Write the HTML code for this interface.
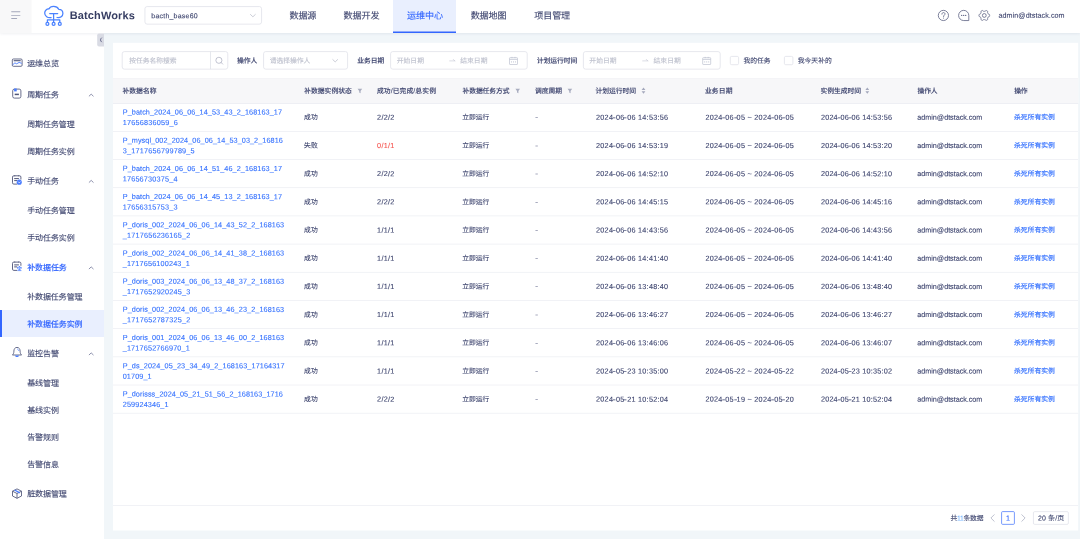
<!DOCTYPE html>
<html lang="zh-CN"><head><meta charset="utf-8"><title>BatchWorks</title><style>
html,body{margin:0;padding:0;}
body{width:1080px;height:539px;overflow:hidden;background:#f1f6f9;position:relative;font-family:"Liberation Sans","Noto Sans CJK SC",sans-serif;-webkit-font-smoothing:antialiased;}
.a{position:absolute;box-sizing:border-box;}
.t i{display:inline-block;font-style:normal;transform:scaleX(1.35);}
.t{white-space:nowrap;transform-origin:0 0;-webkit-text-stroke:0.1px currentColor;}
#w{position:absolute;left:0;top:0;width:1080px;height:539px;overflow:hidden;will-change:transform;}
#t1{letter-spacing:0.140px}#t2{letter-spacing:0.212px}#t3{letter-spacing:-0.128px}#t4{letter-spacing:-0.070px}#t5{letter-spacing:-0.120px}#t6{letter-spacing:-0.120px}#t7{letter-spacing:-0.145px}#t8{letter-spacing:0.054px}#t9{letter-spacing:-0.072px}#t10{letter-spacing:-0.072px}#t11{letter-spacing:-0.098px}#t12{letter-spacing:-0.098px}#t13{letter-spacing:-0.072px}#t14{letter-spacing:-0.098px}#t15{letter-spacing:-0.098px}#t16{letter-spacing:-0.087px}#t17{letter-spacing:-0.105px}#t18{letter-spacing:-0.105px}#t19{letter-spacing:-0.072px}#t20{letter-spacing:-0.072px}#t21{letter-spacing:-0.072px}#t22{letter-spacing:-0.072px}#t23{letter-spacing:-0.072px}#t24{letter-spacing:-0.087px}#t25{letter-spacing:-0.039px}#t26{letter-spacing:0.005px}#t27{letter-spacing:-0.029px}#t28{letter-spacing:-0.070px}#t29{letter-spacing:0.005px}#t30{letter-spacing:0.005px}#t31{letter-spacing:-0.029px}#t32{letter-spacing:0.005px}#t33{letter-spacing:0.005px}#t34{letter-spacing:-0.095px}#t35{letter-spacing:0.024px}#t36{letter-spacing:0.024px}#t37{letter-spacing:0.004px}#t38{letter-spacing:0.095px}#t39{letter-spacing:-0.067px}#t40{letter-spacing:-0.020px}#t41{letter-spacing:-0.029px}#t42{letter-spacing:0.105px}#t43{letter-spacing:-0.029px}#t44{letter-spacing:-0.095px}#t45{letter-spacing:-0.119px}#t46{letter-spacing:0.096px}#t47{letter-spacing:0.225px}#t48{letter-spacing:0.132px}#t49{letter-spacing:0.244px}#t50{letter-spacing:-0.070px}#t52{letter-spacing:0.262px}#t53{letter-spacing:0.270px}#t54{letter-spacing:0.204px}#t55{letter-spacing:-0.044px}#t56{letter-spacing:0.013px}#t57{letter-spacing:0.088px}#t58{letter-spacing:0.212px}#t59{letter-spacing:0.132px}#t60{letter-spacing:0.244px}#t61{letter-spacing:-0.070px}#t63{letter-spacing:0.262px}#t64{letter-spacing:0.270px}#t65{letter-spacing:0.204px}#t66{letter-spacing:-0.044px}#t67{letter-spacing:0.013px}#t68{letter-spacing:0.096px}#t69{letter-spacing:0.194px}#t70{letter-spacing:0.132px}#t71{letter-spacing:0.244px}#t72{letter-spacing:-0.070px}#t74{letter-spacing:0.262px}#t75{letter-spacing:0.270px}#t76{letter-spacing:0.204px}#t77{letter-spacing:-0.044px}#t78{letter-spacing:0.013px}#t79{letter-spacing:0.096px}#t80{letter-spacing:0.194px}#t81{letter-spacing:0.132px}#t82{letter-spacing:0.244px}#t83{letter-spacing:-0.070px}#t85{letter-spacing:0.262px}#t86{letter-spacing:0.270px}#t87{letter-spacing:0.204px}#t88{letter-spacing:-0.044px}#t89{letter-spacing:0.013px}#t90{letter-spacing:0.095px}#t91{letter-spacing:0.208px}#t92{letter-spacing:0.132px}#t93{letter-spacing:0.244px}#t94{letter-spacing:-0.070px}#t96{letter-spacing:0.262px}#t97{letter-spacing:0.270px}#t98{letter-spacing:0.204px}#t99{letter-spacing:-0.044px}#t100{letter-spacing:0.013px}#t101{letter-spacing:0.095px}#t102{letter-spacing:0.171px}#t103{letter-spacing:0.132px}#t104{letter-spacing:0.244px}#t105{letter-spacing:-0.070px}#t107{letter-spacing:0.262px}#t108{letter-spacing:0.270px}#t109{letter-spacing:0.204px}#t110{letter-spacing:-0.044px}#t111{letter-spacing:0.013px}#t112{letter-spacing:0.095px}#t113{letter-spacing:0.208px}#t114{letter-spacing:0.132px}#t115{letter-spacing:0.244px}#t116{letter-spacing:-0.070px}#t118{letter-spacing:0.262px}#t119{letter-spacing:0.270px}#t120{letter-spacing:0.204px}#t121{letter-spacing:-0.044px}#t122{letter-spacing:0.013px}#t123{letter-spacing:0.095px}#t124{letter-spacing:0.208px}#t125{letter-spacing:0.132px}#t126{letter-spacing:0.244px}#t127{letter-spacing:-0.070px}#t129{letter-spacing:0.262px}#t130{letter-spacing:0.270px}#t131{letter-spacing:0.204px}#t132{letter-spacing:-0.044px}#t133{letter-spacing:0.013px}#t134{letter-spacing:0.095px}#t135{letter-spacing:0.171px}#t136{letter-spacing:0.132px}#t137{letter-spacing:0.244px}#t138{letter-spacing:-0.070px}#t140{letter-spacing:0.262px}#t141{letter-spacing:0.270px}#t142{letter-spacing:0.204px}#t143{letter-spacing:-0.044px}#t144{letter-spacing:0.013px}#t145{letter-spacing:0.110px}#t146{letter-spacing:0.116px}#t147{letter-spacing:0.132px}#t148{letter-spacing:0.244px}#t149{letter-spacing:-0.070px}#t151{letter-spacing:0.262px}#t152{letter-spacing:0.270px}#t153{letter-spacing:0.204px}#t154{letter-spacing:-0.044px}#t155{letter-spacing:0.013px}#t156{letter-spacing:0.085px}#t157{letter-spacing:0.153px}#t158{letter-spacing:0.132px}#t159{letter-spacing:0.244px}#t160{letter-spacing:-0.070px}#t162{letter-spacing:0.262px}#t163{letter-spacing:0.270px}#t164{letter-spacing:0.204px}#t165{letter-spacing:-0.044px}#t166{letter-spacing:0.013px}#t167{letter-spacing:-0.241px}#t169{letter-spacing:0.090px}</style></head><body><div id="w">
<div class="a" style="left:0.00px;top:33.00px;width:104.00px;height:506.00px;background:#fff;"></div>
<div class="a" style="left:0.00px;top:0.00px;width:1080.00px;height:33.20px;background:#fff;box-shadow:0 1px 2.5px rgba(50,60,120,0.08);"></div>
<div class="a" style="left:393.00px;top:0.00px;width:63.30px;height:33.20px;background:#e9effe;"></div>
<div class="a" style="left:393.00px;top:31.00px;width:63.30px;height:2.00px;background:linear-gradient(to bottom,#8fa9fb 0,#8fa9fb 50%,#3366ff 50%,#3366ff 100%);"></div>
<div class="a" style="left:0.00px;top:309.80px;width:104.00px;height:27.20px;background:#e9effe;"></div>
<div class="a" style="left:0.00px;top:309.80px;width:2.00px;height:27.20px;background:#3366ff;"></div>
<svg class="a" style="left:0;top:0" width="1080" height="539" viewBox="0 0 1080 539">
<rect x="113.00" y="42.80" width="965.20" height="487.70" rx="0" fill="#fff"/>
<rect x="0.00" y="0.00" width="31.60" height="33.10" rx="0" fill="#f8f8f9"/>
<rect x="11.10" y="11.25" width="9.30" height="0.90" rx="0.4" fill="#a3a7bb"/>
<rect x="11.10" y="14.90" width="9.30" height="0.90" rx="0.4" fill="#a3a7bb"/>
<rect x="11.10" y="18.05" width="6.10" height="0.90" rx="0.4" fill="#a3a7bb"/>
<g transform="translate(43.50 5.70)" fill="none"><g stroke="#4a82ff" stroke-width="1.25" stroke-linecap="round" stroke-linejoin="round"><path d="M7.6 11.9 C4.2 12.4 1.2 10.6 1.2 7.4 C1.2 4.6 3.4 3.1 5.4 3.3 C6.3 1.3 8.3 0.7 10.1 0.7 C12.6 0.7 14.4 1.9 15.2 3.6 C17.6 3.6 19.4 5.3 19.4 7.7 C19.4 10.4 17 12.3 13.6 11.8"/><path d="M6.2 7.8 H14.2 M10.1 7.8 V16.7 M3.9 16.4 V14.1 H16.3 V16.4"/><circle cx="3.9" cy="18.2" r="1.45"/><circle cx="10.1" cy="18.2" r="1.45"/><circle cx="16.3" cy="18.2" r="1.45"/></g></g>
<rect x="144.95" y="6.55" width="116.60" height="17.60" rx="2.2" fill="none" stroke="#dcdee6" stroke-width="0.7"/>
<g transform="translate(249.90 13.70)" fill="none"><path d="M0.6 0.8 L3 3.1 L5.4 0.8" stroke="#b4b7c6" stroke-width="0.7" stroke-linecap="round" stroke-linejoin="round"/></g>
<g transform="translate(937.40 9.45)" fill="none"><circle cx="6" cy="6" r="5.1" stroke="#5d6283" stroke-width="0.8"/><path d="M4.5 4.7 C4.5 3.7 5.2 3.1 6.1 3.1 C7 3.1 7.6 3.7 7.6 4.5 C7.6 5.5 6.1 5.7 6.1 7.1" stroke="#5d6283" stroke-width="0.8" stroke-linecap="round"/><circle cx="6.1" cy="8.6" r="0.5" fill="#5d6283"/></g>
<g transform="translate(957.70 9.45)" fill="none"><path d="M6 0.9 A5.1 5.1 0 1 0 6 11.1 H11.1 V6 A5.1 5.1 0 0 0 6 0.9 Z" stroke="#5d6283" stroke-width="0.8" stroke-linejoin="round"/><circle cx="4" cy="6" r="0.65" fill="#5d6283"/><circle cx="6" cy="6" r="0.65" fill="#5d6283"/><circle cx="8" cy="6" r="0.65" fill="#5d6283"/></g>
<g transform="translate(978.30 9.45)" fill="none"><path d="M11.35 6.00 L11.34 6.35 L11.30 6.70 L11.06 7.01 L10.59 7.23 L10.11 7.39 L9.83 7.59 L9.72 7.84 L9.59 8.07 L9.45 8.31 L9.29 8.53 L9.26 8.86 L9.36 9.36 L9.40 9.88 L9.26 10.24 L8.97 10.45 L8.68 10.63 L8.37 10.80 L8.05 10.94 L7.66 10.89 L7.23 10.59 L6.85 10.25 L6.54 10.11 L6.27 10.14 L6.00 10.15 L5.73 10.14 L5.46 10.11 L5.15 10.25 L4.77 10.59 L4.34 10.89 L3.95 10.94 L3.63 10.80 L3.33 10.63 L3.03 10.45 L2.74 10.24 L2.60 9.88 L2.64 9.36 L2.74 8.86 L2.71 8.53 L2.55 8.31 L2.41 8.07 L2.28 7.84 L2.17 7.59 L1.89 7.39 L1.41 7.23 L0.94 7.01 L0.70 6.70 L0.66 6.35 L0.65 6.00 L0.66 5.65 L0.70 5.30 L0.94 4.99 L1.41 4.77 L1.89 4.61 L2.17 4.41 L2.28 4.16 L2.41 3.93 L2.55 3.69 L2.71 3.47 L2.74 3.14 L2.64 2.64 L2.60 2.12 L2.74 1.76 L3.03 1.55 L3.32 1.37 L3.63 1.20 L3.95 1.06 L4.34 1.11 L4.77 1.41 L5.15 1.75 L5.46 1.89 L5.73 1.86 L6.00 1.85 L6.27 1.86 L6.54 1.89 L6.85 1.75 L7.23 1.41 L7.66 1.11 L8.05 1.06 L8.37 1.20 L8.68 1.37 L8.97 1.55 L9.26 1.76 L9.40 2.12 L9.36 2.64 L9.26 3.14 L9.29 3.47 L9.45 3.69 L9.59 3.92 L9.72 4.16 L9.83 4.41 L10.11 4.61 L10.59 4.77 L11.06 4.99 L11.30 5.30 L11.34 5.65 Z" stroke="#5d6283" stroke-width="0.8" stroke-linejoin="round"/><circle cx="6" cy="6" r="1.9" stroke="#5d6283" stroke-width="0.8"/></g>
<path d="M104 33.4 H99 Q97.2 33.4 97.2 35.2 V44.8 Q97.2 46.6 99 46.6 H104 Z" fill="#d9dbe4"/>
<g transform="translate(98.60 37.40)" fill="none"><path d="M2.9 0.5 C1.5 1.6 1.5 3.4 2.9 4.5" stroke="#5d6283" stroke-width="0.9" stroke-linecap="round"/></g>
<g transform="translate(88.30 93.05)" fill="none"><path d="M0.9 3 L2.9 1.1 L4.9 3" stroke="#8d91ad" stroke-width="1" stroke-linecap="round" stroke-linejoin="round"/></g>
<g transform="translate(88.30 179.30)" fill="none"><path d="M0.9 3 L2.9 1.1 L4.9 3" stroke="#8d91ad" stroke-width="1" stroke-linecap="round" stroke-linejoin="round"/></g>
<g transform="translate(88.30 265.80)" fill="none"><path d="M0.9 3 L2.9 1.1 L4.9 3" stroke="#8d91ad" stroke-width="1" stroke-linecap="round" stroke-linejoin="round"/></g>
<g transform="translate(88.30 351.80)" fill="none"><path d="M0.9 3 L2.9 1.1 L4.9 3" stroke="#8d91ad" stroke-width="1" stroke-linecap="round" stroke-linejoin="round"/></g>
<g transform="translate(11.50 58.20)" fill="none"><rect x="0.8" y="0.8" width="9.8" height="7.3" rx="1.1" stroke="#4f5578" stroke-width="0.85"/><path d="M2.2 2.5 H9.2" stroke="#4f5578" stroke-width="1.1"/><path d="M1.4 6.4 L3.4 4.7 L5.2 5.6 L7.6 4.2 L9.8 5" stroke="#4a7dff" stroke-width="0.9" stroke-linejoin="round" stroke-linecap="round"/></g>
<g transform="translate(11.80 88.10)" fill="none"><rect x="0.9" y="1" width="8.2" height="9" rx="1.7" stroke="#4f5578" stroke-width="0.85"/><rect x="2.3" y="0.4" width="2.6" height="2.9" fill="#4a7dff"/><path d="M2.9 6.3 H7.1" stroke="#4f5578" stroke-width="1.5"/></g>
<g transform="translate(11.60 174.70)" fill="none"><path d="M5.2 9.4 H2.2 C1.3 9.4 0.9 9 0.9 8.1 V2.4 C0.9 1.5 1.3 1.1 2.2 1.1 H8 C8.9 1.1 9.3 1.5 9.3 2.4 V4.4" stroke="#4f5578" stroke-width="0.9" stroke-linecap="round"/><path d="M3.1 0.7 V1.3 M7.1 0.7 V1.3" stroke="#4f5578" stroke-width="0.6" stroke-linecap="round"/><path d="M3 3.9 H6.9 M3 5.9 H5.1" stroke="#4f5578" stroke-width="1" stroke-linecap="round"/><circle cx="7.65" cy="7.45" r="2.55" fill="#4a7dff"/><path d="M6.75 7.2 L7.65 8.2 L8.55 7.2" stroke="#fff" stroke-width="0.7" stroke-linecap="round" stroke-linejoin="round"/></g>
<g transform="translate(11.60 261.00)" fill="none"><path d="M5.2 9.4 H2.2 C1.3 9.4 0.9 9 0.9 8.1 V2.4 C0.9 1.5 1.3 1.1 2.2 1.1 H8 C8.9 1.1 9.3 1.5 9.3 2.4 V4.4" stroke="#4f5578" stroke-width="0.9" stroke-linecap="round"/><path d="M3.1 0.7 V1.3 M7.1 0.7 V1.3" stroke="#4f5578" stroke-width="0.6" stroke-linecap="round"/><path d="M3 3.9 H6.9 M3 5.9 H5.1" stroke="#4f5578" stroke-width="1" stroke-linecap="round"/><circle cx="6.3" cy="6.5" r="0.75" fill="#4a7dff"/><circle cx="7.8" cy="5.8" r="0.75" fill="#4a7dff"/><circle cx="9.3" cy="6.5" r="0.75" fill="#4a7dff"/><path d="M6 7.6 L7.8 8.7 L9.6 7.6 M7.8 6.8 V8.7 M6.2 9.6 H9.4" stroke="#4a7dff" stroke-width="0.75" stroke-linecap="round" stroke-linejoin="round"/></g>
<g transform="translate(11.50 346.60)" fill="none"><path d="M5.5 0.8 C3.4 0.8 2.4 2.5 2.4 4.5 C2.4 6.4 1.9 7.5 0.9 8.4 H10.1 C9.1 7.5 8.6 6.4 8.6 4.5 C8.6 2.5 7.6 0.8 5.5 0.8 Z" stroke="#4f5578" stroke-width="0.85" stroke-linejoin="round"/><path d="M3.5 8.9 C3.9 10.9 7.1 10.9 7.5 8.9 Z" fill="#4a7dff"/><path d="M6 2.5 C6.7 2.7 7.1 3.3 7.2 4" stroke="#4a7dff" stroke-width="0.7" stroke-linecap="round"/></g>
<g transform="translate(11.50 488.10)" fill="none"><path d="M5.5 0.8 L10 3.1 V7.9 L5.5 10.2 L1 7.9 V3.1 Z" stroke="#4f5578" stroke-width="0.85" stroke-linejoin="round"/><path d="M1 3.1 L5.5 5.4 L10 3.1 M5.5 5.4 V10.2" stroke="#4f5578" stroke-width="0.85" stroke-linejoin="round"/><path d="M3.1 1.9 L8.3 4.8" stroke="#4a7dff" stroke-width="1.4"/></g>
<rect x="122.20" y="51.60" width="105.60" height="17.55" rx="2.2" fill="none" stroke="#dcdee6" stroke-width="0.7"/>
<rect x="210.05" y="51.60" width="0.7" height="17.55" fill="#dcdee6"/>
<g transform="translate(215.30 56.70)" fill="none"><circle cx="3.6" cy="3.6" r="3.05" stroke="#adb0c2" stroke-width="0.75"/><path d="M5.8 5.8 L7.4 7.4" stroke="#adb0c2" stroke-width="0.75" stroke-linecap="round"/></g>
<rect x="263.55" y="51.60" width="84.05" height="17.55" rx="2.2" fill="none" stroke="#dcdee6" stroke-width="0.7"/>
<g transform="translate(332.20 58.80)" fill="none"><path d="M0.6 0.8 L3 3.1 L5.4 0.8" stroke="#b4b7c6" stroke-width="0.7" stroke-linecap="round" stroke-linejoin="round"/></g>
<rect x="390.60" y="51.60" width="136.60" height="17.55" rx="2.2" fill="none" stroke="#dcdee6" stroke-width="0.7"/>
<g transform="translate(449.40 58.50)" fill="none"><path d="M0.3 2.4 H5.4 M3.9 0.9 L5.4 2.4" stroke="#c3c5d1" stroke-width="0.6" stroke-linecap="round"/></g>
<g transform="translate(508.80 56.50)" fill="none"><rect x="0.7" y="1.2" width="8" height="6.8" rx="0.5" stroke="#c2c5d3" stroke-width="0.75"/><path d="M0.7 2.9 H8.7" stroke="#c2c5d3" stroke-width="0.8"/><path d="M3.2 0.4 V1.6 M6.2 0.4 V1.6" stroke="#c2c5d3" stroke-width="0.9"/><path d="M2.7 4.8 V6 M4.7 4.8 V6 M6.7 4.8 V6" stroke="#c2c5d3" stroke-width="0.85"/></g>
<rect x="583.40" y="51.60" width="136.80" height="17.55" rx="2.2" fill="none" stroke="#dcdee6" stroke-width="0.7"/>
<g transform="translate(642.40 58.50)" fill="none"><path d="M0.3 2.4 H5.4 M3.9 0.9 L5.4 2.4" stroke="#c3c5d1" stroke-width="0.6" stroke-linecap="round"/></g>
<g transform="translate(702.00 56.50)" fill="none"><rect x="0.7" y="1.2" width="8" height="6.8" rx="0.5" stroke="#c2c5d3" stroke-width="0.75"/><path d="M0.7 2.9 H8.7" stroke="#c2c5d3" stroke-width="0.8"/><path d="M3.2 0.4 V1.6 M6.2 0.4 V1.6" stroke="#c2c5d3" stroke-width="0.9"/><path d="M2.7 4.8 V6 M4.7 4.8 V6 M6.7 4.8 V6" stroke="#c2c5d3" stroke-width="0.85"/></g>
<rect x="730.30" y="56.40" width="8.30" height="8.30" rx="1.3" fill="none" stroke="#dcdee6" stroke-width="0.7"/>
<rect x="784.40" y="56.40" width="8.50" height="8.30" rx="1.3" fill="none" stroke="#dcdee6" stroke-width="0.7"/>
<rect x="113.00" y="78.00" width="965.20" height="25.55" rx="0" fill="#f7f7f9"/>
<rect x="113.00" y="103.00" width="965.20" height="0.6" fill="#e6e8ee"/>
<rect x="113.00" y="77.95" width="965.20" height="0.5" fill="#eff0f4"/>
<g transform="translate(357.40 88.30)" fill="none"><path d="M0.2 0.4 H4.8 L3.2 2.7 V5 L1.8 4.3 V2.7 Z" fill="#a9adc0"/></g>
<g transform="translate(515.20 88.30)" fill="none"><path d="M0.2 0.4 H4.8 L3.2 2.7 V5 L1.8 4.3 V2.7 Z" fill="#a9adc0"/></g>
<g transform="translate(567.40 88.30)" fill="none"><path d="M0.2 0.4 H4.8 L3.2 2.7 V5 L1.8 4.3 V2.7 Z" fill="#a9adc0"/></g>
<g transform="translate(641.50 87.40)" fill="none"><path d="M0.1 2.6 L2 0.2 L3.9 2.6 Z M0.1 3.9 L2 6.3 L3.9 3.9 Z" fill="#a4a8bc"/></g>
<g transform="translate(865.30 87.40)" fill="none"><path d="M0.1 2.6 L2 0.2 L3.9 2.6 Z M0.1 3.9 L2 6.3 L3.9 3.9 Z" fill="#a4a8bc"/></g>
<rect x="113.00" y="130.99" width="965.20" height="0.7" fill="#ebedf2"/>
<rect x="113.00" y="159.18" width="965.20" height="0.7" fill="#ebedf2"/>
<rect x="113.00" y="187.36" width="965.20" height="0.7" fill="#ebedf2"/>
<rect x="113.00" y="215.55" width="965.20" height="0.7" fill="#ebedf2"/>
<rect x="113.00" y="243.74" width="965.20" height="0.7" fill="#ebedf2"/>
<rect x="113.00" y="271.92" width="965.20" height="0.7" fill="#ebedf2"/>
<rect x="113.00" y="300.11" width="965.20" height="0.7" fill="#ebedf2"/>
<rect x="113.00" y="328.30" width="965.20" height="0.7" fill="#ebedf2"/>
<rect x="113.00" y="356.49" width="965.20" height="0.7" fill="#ebedf2"/>
<rect x="113.00" y="384.67" width="965.20" height="0.7" fill="#ebedf2"/>
<rect x="113.00" y="412.86" width="965.20" height="0.7" fill="#ebedf2"/>
<rect x="113.00" y="505.10" width="965.20" height="0.7" fill="#ebedf2"/>
<g transform="translate(990.00 514.00)" fill="none"><path d="M4.2 0.7 L0.9 4 L4.2 7.3" stroke="#a9adc0" stroke-width="0.75" stroke-linecap="round" stroke-linejoin="round"/></g>
<rect x="1001.60" y="511.60" width="12.80" height="12.75" rx="1.0" fill="none" stroke="#4a78fb" stroke-width="0.75"/>
<g transform="translate(1021.00 514.00)" fill="none"><path d="M0.8 0.7 L4.1 4 L0.8 7.3" stroke="#a9adc0" stroke-width="0.75" stroke-linecap="round" stroke-linejoin="round"/></g>
<rect x="1033.45" y="511.65" width="34.90" height="12.70" rx="1.2" fill="none" stroke="#dcdee6" stroke-width="0.7"/>
</svg>
<span class="a t" id="t1" style="left:69px;top:7px;transform:translate(0.66px,0.11px) rotate(0.03deg);font-size:11px;line-height:16px;color:#363d62;font-weight:700;-webkit-text-stroke:0;">BatchWorks</span>
<span class="a t" id="t2" style="left:151px;top:11px;transform:translate(0.32px,0.16px) rotate(0.03deg);font-size:7px;line-height:10px;color:#3d446e;">bacth_base60</span>
<span class="a t" id="t3" style="left:289px;top:9px;transform:translate(0.44px,0.82px) rotate(0.03deg);font-size:9.1px;line-height:13px;color:#3d446e;">数据源</span>
<span class="a t" id="t4" style="left:343px;top:9px;transform:translate(0.44px,0.82px) rotate(0.03deg);font-size:9.1px;line-height:13px;color:#3d446e;">数据开发</span>
<span class="a t" id="t5" style="left:407px;top:9px;transform:translate(0.04px,0.82px) rotate(0.03deg);font-size:9.1px;line-height:13px;color:#3366ff;">运维中心</span>
<span class="a t" id="t6" style="left:470px;top:9px;transform:translate(0.64px,0.82px) rotate(0.03deg);font-size:9.1px;line-height:13px;color:#3d446e;">数据地图</span>
<span class="a t" id="t7" style="left:534px;top:9px;transform:translate(0.24px,0.82px) rotate(0.03deg);font-size:9.1px;line-height:13px;color:#3d446e;">项目管理</span>
<span class="a t" id="t8" style="left:998px;top:9px;transform:translate(0.51px,0.83px) rotate(0.03deg);font-size:7.2px;line-height:11px;color:#3d446e;">admin@dtstack.com</span>
<span class="a t" id="t9" style="left:27px;top:58px;transform:translate(0.18px,0.37px) rotate(0.03deg);font-size:8.0px;line-height:12px;color:#3d446e;">运维总览</span>
<span class="a t" id="t10" style="left:27px;top:89px;transform:translate(0.18px,0.62px) rotate(0.03deg);font-size:8.0px;line-height:12px;color:#3d446e;">周期任务</span>
<span class="a t" id="t11" style="left:27px;top:119px;transform:translate(0.18px,0.12px) rotate(0.03deg);font-size:8.0px;line-height:12px;color:#3d446e;">周期任务管理</span>
<span class="a t" id="t12" style="left:27px;top:146px;transform:translate(0.18px,0.37px) rotate(0.03deg);font-size:8.0px;line-height:12px;color:#3d446e;">周期任务实例</span>
<span class="a t" id="t13" style="left:27px;top:175px;transform:translate(0.18px,0.87px) rotate(0.03deg);font-size:8.0px;line-height:12px;color:#3d446e;">手动任务</span>
<span class="a t" id="t14" style="left:27px;top:205px;transform:translate(0.18px,0.37px) rotate(0.03deg);font-size:8.0px;line-height:12px;color:#3d446e;">手动任务管理</span>
<span class="a t" id="t15" style="left:27px;top:232px;transform:translate(0.18px,0.62px) rotate(0.03deg);font-size:8.0px;line-height:12px;color:#3d446e;">手动任务实例</span>
<span class="a t" id="t16" style="left:27px;top:262px;transform:translate(0.18px,0.37px) rotate(0.03deg);font-size:8.0px;line-height:12px;color:#3366ff;font-weight:500;">补数据任务</span>
<span class="a t" id="t17" style="left:27px;top:291px;transform:translate(0.18px,0.62px) rotate(0.03deg);font-size:8.0px;line-height:12px;color:#3d446e;">补数据任务管理</span>
<span class="a t" id="t18" style="left:27px;top:318px;transform:translate(0.18px,0.87px) rotate(0.03deg);font-size:8.0px;line-height:12px;color:#3366ff;font-weight:500;">补数据任务实例</span>
<span class="a t" id="t19" style="left:27px;top:348px;transform:translate(0.18px,0.37px) rotate(0.03deg);font-size:8.0px;line-height:12px;color:#3d446e;">监控告警</span>
<span class="a t" id="t20" style="left:27px;top:377px;transform:translate(0.18px,0.87px) rotate(0.03deg);font-size:8.0px;line-height:12px;color:#3d446e;">基线管理</span>
<span class="a t" id="t21" style="left:27px;top:405px;transform:translate(0.18px,0.12px) rotate(0.03deg);font-size:8.0px;line-height:12px;color:#3d446e;">基线实例</span>
<span class="a t" id="t22" style="left:27px;top:432px;transform:translate(0.18px,0.12px) rotate(0.03deg);font-size:8.0px;line-height:12px;color:#3d446e;">告警规则</span>
<span class="a t" id="t23" style="left:27px;top:459px;transform:translate(0.18px,0.37px) rotate(0.03deg);font-size:8.0px;line-height:12px;color:#3d446e;">告警信息</span>
<span class="a t" id="t24" style="left:27px;top:488px;transform:translate(0.18px,0.62px) rotate(0.03deg);font-size:8.0px;line-height:12px;color:#3d446e;">脏数据管理</span>
<span class="a t" id="t25" style="left:129px;top:55px;transform:translate(0.33px,0.98px) rotate(0.03deg);font-size:6.8px;line-height:10px;color:#bcbfcc;">按任务名称搜索</span>
<span class="a t" id="t26" style="left:236px;top:55px;transform:translate(0.93px,0.98px) rotate(0.03deg);font-size:6.8px;line-height:10px;color:#3d446e;font-weight:500;">操作人</span>
<span class="a t" id="t27" style="left:269px;top:55px;transform:translate(0.73px,0.98px) rotate(0.03deg);font-size:6.8px;line-height:10px;color:#bcbfcc;">请选择操作人</span>
<span class="a t" id="t28" style="left:357px;top:55px;transform:translate(0.23px,0.98px) rotate(0.03deg);font-size:6.8px;line-height:10px;color:#3d446e;font-weight:500;">业务日期</span>
<span class="a t" id="t29" style="left:396px;top:55px;transform:translate(0.73px,0.98px) rotate(0.03deg);font-size:6.8px;line-height:10px;color:#bcbfcc;">开始日期</span>
<span class="a t" id="t30" style="left:460px;top:55px;transform:translate(0.23px,0.98px) rotate(0.03deg);font-size:6.8px;line-height:10px;color:#bcbfcc;">结束日期</span>
<span class="a t" id="t31" style="left:536px;top:55px;transform:translate(0.73px,0.98px) rotate(0.03deg);font-size:6.8px;line-height:10px;color:#3d446e;font-weight:500;">计划运行时间</span>
<span class="a t" id="t32" style="left:589px;top:55px;transform:translate(0.33px,0.98px) rotate(0.03deg);font-size:6.8px;line-height:10px;color:#bcbfcc;">开始日期</span>
<span class="a t" id="t33" style="left:653px;top:55px;transform:translate(0.53px,0.98px) rotate(0.03deg);font-size:6.8px;line-height:10px;color:#bcbfcc;">结束日期</span>
<span class="a t" id="t34" style="left:743px;top:55px;transform:translate(0.53px,0.98px) rotate(0.03deg);font-size:6.8px;line-height:10px;color:#3d446e;">我的任务</span>
<span class="a t" id="t35" style="left:797px;top:55px;transform:translate(0.73px,0.98px) rotate(0.03deg);font-size:6.8px;line-height:10px;color:#3d446e;">我今天补的</span>
<span class="a t" id="t36" style="left:122px;top:86px;transform:translate(0.43px,0.18px) rotate(0.03deg);font-size:6.8px;line-height:10px;color:#3d446e;font-weight:500;">补数据名称</span>
<span class="a t" id="t37" style="left:304px;top:86px;transform:translate(0.18px,0.18px) rotate(0.03deg);font-size:6.8px;line-height:10px;color:#3d446e;font-weight:500;">补数据实例状态</span>
<span class="a t" id="t38" style="left:376px;top:86px;transform:translate(0.93px,0.18px) rotate(0.03deg);font-size:6.8px;line-height:10px;color:#3d446e;font-weight:500;">成功/已完成/总实例</span>
<span class="a t" id="t39" style="left:462px;top:86px;transform:translate(0.43px,0.18px) rotate(0.03deg);font-size:6.8px;line-height:10px;color:#3d446e;font-weight:500;">补数据任务方式</span>
<span class="a t" id="t40" style="left:534px;top:86px;transform:translate(0.93px,0.18px) rotate(0.03deg);font-size:6.8px;line-height:10px;color:#3d446e;font-weight:500;">调度周期</span>
<span class="a t" id="t41" style="left:595px;top:86px;transform:translate(0.43px,0.18px) rotate(0.03deg);font-size:6.8px;line-height:10px;color:#3d446e;font-weight:500;">计划运行时间</span>
<span class="a t" id="t42" style="left:704px;top:86px;transform:translate(0.93px,0.18px) rotate(0.03deg);font-size:6.8px;line-height:10px;color:#3d446e;font-weight:500;">业务日期</span>
<span class="a t" id="t43" style="left:820px;top:86px;transform:translate(0.43px,0.18px) rotate(0.03deg);font-size:6.8px;line-height:10px;color:#3d446e;font-weight:500;">实例生成时间</span>
<span class="a t" id="t44" style="left:917px;top:86px;transform:translate(0.43px,0.18px) rotate(0.03deg);font-size:6.8px;line-height:10px;color:#3d446e;font-weight:500;">操作人</span>
<span class="a t" id="t45" style="left:1014px;top:86px;transform:translate(0.18px,0.18px) rotate(0.03deg);font-size:6.8px;line-height:10px;color:#3d446e;font-weight:500;">操作</span>
<span class="a t" id="t46" style="left:122px;top:107px;transform:translate(0.71px,0.49px) rotate(0.03deg);font-size:7.25px;line-height:10px;color:#3370ff;">P_batch_2024_06_06_14_53_43_2_168163_17</span>
<span class="a t" id="t47" style="left:122px;top:117px;transform:translate(0.71px,0.99px) rotate(0.03deg);font-size:7.25px;line-height:10px;color:#3370ff;">17656836059_6</span>
<span class="a t" id="t48" style="left:303px;top:112px;transform:translate(0.98px,0.58px) rotate(0.03deg);font-size:6.8px;line-height:10px;color:#3d446e;">成功</span>
<span class="a t" id="t49" style="left:377px;top:111px;transform:translate(0.11px,0.74px) rotate(0.03deg);font-size:7.25px;line-height:11px;color:#3d446e;">2/2/2</span>
<span class="a t" id="t50" style="left:462px;top:112px;transform:translate(0.23px,0.58px) rotate(0.03deg);font-size:6.8px;line-height:10px;color:#3d446e;">立即运行</span>
<span class="a t" id="t51" style="left:535px;top:111px;transform:translate(0.31px,0.74px) rotate(0.03deg);font-size:7.25px;line-height:11px;color:#5a6084;-webkit-text-stroke:0;"><i>-</i></span>
<span class="a t" id="t52" style="left:596px;top:111px;transform:translate(0.01px,0.74px) rotate(0.03deg);font-size:7.25px;line-height:11px;color:#3d446e;">2024<i>-</i>06<i>-</i>06 14:53:56</span>
<span class="a t" id="t53" style="left:705px;top:111px;transform:translate(0.41px,0.74px) rotate(0.03deg);font-size:7.25px;line-height:11px;color:#3d446e;">2024<i>-</i>06<i>-</i>05 ~ 2024<i>-</i>06<i>-</i>05</span>
<span class="a t" id="t54" style="left:820px;top:111px;transform:translate(0.91px,0.74px) rotate(0.03deg);font-size:7.25px;line-height:11px;color:#3d446e;">2024<i>-</i>06<i>-</i>06 14:53:56</span>
<span class="a t" id="t55" style="left:917px;top:111px;transform:translate(0.31px,0.74px) rotate(0.03deg);font-size:7.25px;line-height:11px;color:#3d446e;">admin@dtstack.com</span>
<span class="a t" id="t56" style="left:1013px;top:112px;transform:translate(0.98px,0.58px) rotate(0.03deg);font-size:6.8px;line-height:10px;color:#3370ff;-webkit-text-stroke:0.15px currentColor;">杀死所有实例</span>
<span class="a t" id="t57" style="left:122px;top:135px;transform:translate(0.71px,0.68px) rotate(0.03deg);font-size:7.25px;line-height:10px;color:#3370ff;">P_mysql_002_2024_06_06_14_53_03_2_16816</span>
<span class="a t" id="t58" style="left:122px;top:146px;transform:translate(0.71px,0.18px) rotate(0.03deg);font-size:7.25px;line-height:10px;color:#3370ff;">3_1717656799789_5</span>
<span class="a t" id="t59" style="left:303px;top:140px;transform:translate(0.98px,0.76px) rotate(0.03deg);font-size:6.8px;line-height:10px;color:#3d446e;">失败</span>
<span class="a t" id="t60" style="left:377px;top:139px;transform:translate(0.11px,0.93px) rotate(0.03deg);font-size:7.25px;line-height:11px;color:#f5544f;">0/1/1</span>
<span class="a t" id="t61" style="left:462px;top:140px;transform:translate(0.23px,0.76px) rotate(0.03deg);font-size:6.8px;line-height:10px;color:#3d446e;">立即运行</span>
<span class="a t" id="t62" style="left:535px;top:139px;transform:translate(0.31px,0.93px) rotate(0.03deg);font-size:7.25px;line-height:11px;color:#5a6084;-webkit-text-stroke:0;"><i>-</i></span>
<span class="a t" id="t63" style="left:596px;top:139px;transform:translate(0.01px,0.93px) rotate(0.03deg);font-size:7.25px;line-height:11px;color:#3d446e;">2024<i>-</i>06<i>-</i>06 14:53:19</span>
<span class="a t" id="t64" style="left:705px;top:139px;transform:translate(0.41px,0.93px) rotate(0.03deg);font-size:7.25px;line-height:11px;color:#3d446e;">2024<i>-</i>06<i>-</i>05 ~ 2024<i>-</i>06<i>-</i>05</span>
<span class="a t" id="t65" style="left:820px;top:139px;transform:translate(0.91px,0.93px) rotate(0.03deg);font-size:7.25px;line-height:11px;color:#3d446e;">2024<i>-</i>06<i>-</i>06 14:53:20</span>
<span class="a t" id="t66" style="left:917px;top:139px;transform:translate(0.31px,0.93px) rotate(0.03deg);font-size:7.25px;line-height:11px;color:#3d446e;">admin@dtstack.com</span>
<span class="a t" id="t67" style="left:1013px;top:140px;transform:translate(0.98px,0.76px) rotate(0.03deg);font-size:6.8px;line-height:10px;color:#3370ff;-webkit-text-stroke:0.15px currentColor;">杀死所有实例</span>
<span class="a t" id="t68" style="left:122px;top:163px;transform:translate(0.71px,0.87px) rotate(0.03deg);font-size:7.25px;line-height:10px;color:#3370ff;">P_batch_2024_06_06_14_51_46_2_168163_17</span>
<span class="a t" id="t69" style="left:122px;top:174px;transform:translate(0.71px,0.37px) rotate(0.03deg);font-size:7.25px;line-height:10px;color:#3370ff;">17656730375_4</span>
<span class="a t" id="t70" style="left:303px;top:168px;transform:translate(0.98px,0.95px) rotate(0.03deg);font-size:6.8px;line-height:10px;color:#3d446e;">成功</span>
<span class="a t" id="t71" style="left:377px;top:168px;transform:translate(0.11px,0.12px) rotate(0.03deg);font-size:7.25px;line-height:11px;color:#3d446e;">2/2/2</span>
<span class="a t" id="t72" style="left:462px;top:168px;transform:translate(0.23px,0.95px) rotate(0.03deg);font-size:6.8px;line-height:10px;color:#3d446e;">立即运行</span>
<span class="a t" id="t73" style="left:535px;top:168px;transform:translate(0.31px,0.12px) rotate(0.03deg);font-size:7.25px;line-height:11px;color:#5a6084;-webkit-text-stroke:0;"><i>-</i></span>
<span class="a t" id="t74" style="left:596px;top:168px;transform:translate(0.01px,0.12px) rotate(0.03deg);font-size:7.25px;line-height:11px;color:#3d446e;">2024<i>-</i>06<i>-</i>06 14:52:10</span>
<span class="a t" id="t75" style="left:705px;top:168px;transform:translate(0.41px,0.12px) rotate(0.03deg);font-size:7.25px;line-height:11px;color:#3d446e;">2024<i>-</i>06<i>-</i>05 ~ 2024<i>-</i>06<i>-</i>05</span>
<span class="a t" id="t76" style="left:820px;top:168px;transform:translate(0.91px,0.12px) rotate(0.03deg);font-size:7.25px;line-height:11px;color:#3d446e;">2024<i>-</i>06<i>-</i>06 14:52:10</span>
<span class="a t" id="t77" style="left:917px;top:168px;transform:translate(0.31px,0.12px) rotate(0.03deg);font-size:7.25px;line-height:11px;color:#3d446e;">admin@dtstack.com</span>
<span class="a t" id="t78" style="left:1013px;top:168px;transform:translate(0.98px,0.95px) rotate(0.03deg);font-size:6.8px;line-height:10px;color:#3370ff;-webkit-text-stroke:0.15px currentColor;">杀死所有实例</span>
<span class="a t" id="t79" style="left:122px;top:192px;transform:translate(0.71px,0.05px) rotate(0.03deg);font-size:7.25px;line-height:10px;color:#3370ff;">P_batch_2024_06_06_14_45_13_2_168163_17</span>
<span class="a t" id="t80" style="left:122px;top:202px;transform:translate(0.71px,0.55px) rotate(0.03deg);font-size:7.25px;line-height:10px;color:#3370ff;">17656315753_3</span>
<span class="a t" id="t81" style="left:303px;top:197px;transform:translate(0.98px,0.14px) rotate(0.03deg);font-size:6.8px;line-height:10px;color:#3d446e;">成功</span>
<span class="a t" id="t82" style="left:377px;top:196px;transform:translate(0.11px,0.30px) rotate(0.03deg);font-size:7.25px;line-height:11px;color:#3d446e;">2/2/2</span>
<span class="a t" id="t83" style="left:462px;top:197px;transform:translate(0.23px,0.14px) rotate(0.03deg);font-size:6.8px;line-height:10px;color:#3d446e;">立即运行</span>
<span class="a t" id="t84" style="left:535px;top:196px;transform:translate(0.31px,0.30px) rotate(0.03deg);font-size:7.25px;line-height:11px;color:#5a6084;-webkit-text-stroke:0;"><i>-</i></span>
<span class="a t" id="t85" style="left:596px;top:196px;transform:translate(0.01px,0.30px) rotate(0.03deg);font-size:7.25px;line-height:11px;color:#3d446e;">2024<i>-</i>06<i>-</i>06 14:45:15</span>
<span class="a t" id="t86" style="left:705px;top:196px;transform:translate(0.41px,0.30px) rotate(0.03deg);font-size:7.25px;line-height:11px;color:#3d446e;">2024<i>-</i>06<i>-</i>05 ~ 2024<i>-</i>06<i>-</i>05</span>
<span class="a t" id="t87" style="left:820px;top:196px;transform:translate(0.91px,0.30px) rotate(0.03deg);font-size:7.25px;line-height:11px;color:#3d446e;">2024<i>-</i>06<i>-</i>06 14:45:16</span>
<span class="a t" id="t88" style="left:917px;top:196px;transform:translate(0.31px,0.30px) rotate(0.03deg);font-size:7.25px;line-height:11px;color:#3d446e;">admin@dtstack.com</span>
<span class="a t" id="t89" style="left:1013px;top:197px;transform:translate(0.98px,0.14px) rotate(0.03deg);font-size:6.8px;line-height:10px;color:#3370ff;-webkit-text-stroke:0.15px currentColor;">杀死所有实例</span>
<span class="a t" id="t90" style="left:122px;top:220px;transform:translate(0.71px,0.24px) rotate(0.03deg);font-size:7.25px;line-height:10px;color:#3370ff;">P_doris_002_2024_06_06_14_43_52_2_168163</span>
<span class="a t" id="t91" style="left:122px;top:230px;transform:translate(0.71px,0.74px) rotate(0.03deg);font-size:7.25px;line-height:10px;color:#3370ff;">_1717656236165_2</span>
<span class="a t" id="t92" style="left:303px;top:225px;transform:translate(0.98px,0.33px) rotate(0.03deg);font-size:6.8px;line-height:10px;color:#3d446e;">成功</span>
<span class="a t" id="t93" style="left:377px;top:224px;transform:translate(0.11px,0.49px) rotate(0.03deg);font-size:7.25px;line-height:11px;color:#3d446e;">1/1/1</span>
<span class="a t" id="t94" style="left:462px;top:225px;transform:translate(0.23px,0.33px) rotate(0.03deg);font-size:6.8px;line-height:10px;color:#3d446e;">立即运行</span>
<span class="a t" id="t95" style="left:535px;top:224px;transform:translate(0.31px,0.49px) rotate(0.03deg);font-size:7.25px;line-height:11px;color:#5a6084;-webkit-text-stroke:0;"><i>-</i></span>
<span class="a t" id="t96" style="left:596px;top:224px;transform:translate(0.01px,0.49px) rotate(0.03deg);font-size:7.25px;line-height:11px;color:#3d446e;">2024<i>-</i>06<i>-</i>06 14:43:56</span>
<span class="a t" id="t97" style="left:705px;top:224px;transform:translate(0.41px,0.49px) rotate(0.03deg);font-size:7.25px;line-height:11px;color:#3d446e;">2024<i>-</i>06<i>-</i>05 ~ 2024<i>-</i>06<i>-</i>05</span>
<span class="a t" id="t98" style="left:820px;top:224px;transform:translate(0.91px,0.49px) rotate(0.03deg);font-size:7.25px;line-height:11px;color:#3d446e;">2024<i>-</i>06<i>-</i>06 14:43:56</span>
<span class="a t" id="t99" style="left:917px;top:224px;transform:translate(0.31px,0.49px) rotate(0.03deg);font-size:7.25px;line-height:11px;color:#3d446e;">admin@dtstack.com</span>
<span class="a t" id="t100" style="left:1013px;top:225px;transform:translate(0.98px,0.33px) rotate(0.03deg);font-size:6.8px;line-height:10px;color:#3370ff;-webkit-text-stroke:0.15px currentColor;">杀死所有实例</span>
<span class="a t" id="t101" style="left:122px;top:248px;transform:translate(0.71px,0.43px) rotate(0.03deg);font-size:7.25px;line-height:10px;color:#3370ff;">P_doris_002_2024_06_06_14_41_38_2_168163</span>
<span class="a t" id="t102" style="left:122px;top:258px;transform:translate(0.71px,0.93px) rotate(0.03deg);font-size:7.25px;line-height:10px;color:#3370ff;">_1717656100243_1</span>
<span class="a t" id="t103" style="left:303px;top:253px;transform:translate(0.98px,0.51px) rotate(0.03deg);font-size:6.8px;line-height:10px;color:#3d446e;">成功</span>
<span class="a t" id="t104" style="left:377px;top:252px;transform:translate(0.11px,0.68px) rotate(0.03deg);font-size:7.25px;line-height:11px;color:#3d446e;">1/1/1</span>
<span class="a t" id="t105" style="left:462px;top:253px;transform:translate(0.23px,0.51px) rotate(0.03deg);font-size:6.8px;line-height:10px;color:#3d446e;">立即运行</span>
<span class="a t" id="t106" style="left:535px;top:252px;transform:translate(0.31px,0.68px) rotate(0.03deg);font-size:7.25px;line-height:11px;color:#5a6084;-webkit-text-stroke:0;"><i>-</i></span>
<span class="a t" id="t107" style="left:596px;top:252px;transform:translate(0.01px,0.68px) rotate(0.03deg);font-size:7.25px;line-height:11px;color:#3d446e;">2024<i>-</i>06<i>-</i>06 14:41:40</span>
<span class="a t" id="t108" style="left:705px;top:252px;transform:translate(0.41px,0.68px) rotate(0.03deg);font-size:7.25px;line-height:11px;color:#3d446e;">2024<i>-</i>06<i>-</i>05 ~ 2024<i>-</i>06<i>-</i>05</span>
<span class="a t" id="t109" style="left:820px;top:252px;transform:translate(0.91px,0.68px) rotate(0.03deg);font-size:7.25px;line-height:11px;color:#3d446e;">2024<i>-</i>06<i>-</i>06 14:41:40</span>
<span class="a t" id="t110" style="left:917px;top:252px;transform:translate(0.31px,0.68px) rotate(0.03deg);font-size:7.25px;line-height:11px;color:#3d446e;">admin@dtstack.com</span>
<span class="a t" id="t111" style="left:1013px;top:253px;transform:translate(0.98px,0.51px) rotate(0.03deg);font-size:6.8px;line-height:10px;color:#3370ff;-webkit-text-stroke:0.15px currentColor;">杀死所有实例</span>
<span class="a t" id="t112" style="left:122px;top:276px;transform:translate(0.71px,0.62px) rotate(0.03deg);font-size:7.25px;line-height:10px;color:#3370ff;">P_doris_003_2024_06_06_13_48_37_2_168163</span>
<span class="a t" id="t113" style="left:122px;top:287px;transform:translate(0.71px,0.12px) rotate(0.03deg);font-size:7.25px;line-height:10px;color:#3370ff;">_1717652920245_3</span>
<span class="a t" id="t114" style="left:303px;top:281px;transform:translate(0.98px,0.70px) rotate(0.03deg);font-size:6.8px;line-height:10px;color:#3d446e;">成功</span>
<span class="a t" id="t115" style="left:377px;top:280px;transform:translate(0.11px,0.87px) rotate(0.03deg);font-size:7.25px;line-height:11px;color:#3d446e;">1/1/1</span>
<span class="a t" id="t116" style="left:462px;top:281px;transform:translate(0.23px,0.70px) rotate(0.03deg);font-size:6.8px;line-height:10px;color:#3d446e;">立即运行</span>
<span class="a t" id="t117" style="left:535px;top:280px;transform:translate(0.31px,0.87px) rotate(0.03deg);font-size:7.25px;line-height:11px;color:#5a6084;-webkit-text-stroke:0;"><i>-</i></span>
<span class="a t" id="t118" style="left:596px;top:280px;transform:translate(0.01px,0.87px) rotate(0.03deg);font-size:7.25px;line-height:11px;color:#3d446e;">2024<i>-</i>06<i>-</i>06 13:48:40</span>
<span class="a t" id="t119" style="left:705px;top:280px;transform:translate(0.41px,0.87px) rotate(0.03deg);font-size:7.25px;line-height:11px;color:#3d446e;">2024<i>-</i>06<i>-</i>05 ~ 2024<i>-</i>06<i>-</i>05</span>
<span class="a t" id="t120" style="left:820px;top:280px;transform:translate(0.91px,0.87px) rotate(0.03deg);font-size:7.25px;line-height:11px;color:#3d446e;">2024<i>-</i>06<i>-</i>06 13:48:40</span>
<span class="a t" id="t121" style="left:917px;top:280px;transform:translate(0.31px,0.87px) rotate(0.03deg);font-size:7.25px;line-height:11px;color:#3d446e;">admin@dtstack.com</span>
<span class="a t" id="t122" style="left:1013px;top:281px;transform:translate(0.98px,0.70px) rotate(0.03deg);font-size:6.8px;line-height:10px;color:#3370ff;-webkit-text-stroke:0.15px currentColor;">杀死所有实例</span>
<span class="a t" id="t123" style="left:122px;top:304px;transform:translate(0.71px,0.80px) rotate(0.03deg);font-size:7.25px;line-height:10px;color:#3370ff;">P_doris_002_2024_06_06_13_46_23_2_168163</span>
<span class="a t" id="t124" style="left:122px;top:315px;transform:translate(0.71px,0.30px) rotate(0.03deg);font-size:7.25px;line-height:10px;color:#3370ff;">_1717652787325_2</span>
<span class="a t" id="t125" style="left:303px;top:309px;transform:translate(0.98px,0.89px) rotate(0.03deg);font-size:6.8px;line-height:10px;color:#3d446e;">成功</span>
<span class="a t" id="t126" style="left:377px;top:309px;transform:translate(0.11px,0.05px) rotate(0.03deg);font-size:7.25px;line-height:11px;color:#3d446e;">1/1/1</span>
<span class="a t" id="t127" style="left:462px;top:309px;transform:translate(0.23px,0.89px) rotate(0.03deg);font-size:6.8px;line-height:10px;color:#3d446e;">立即运行</span>
<span class="a t" id="t128" style="left:535px;top:309px;transform:translate(0.31px,0.05px) rotate(0.03deg);font-size:7.25px;line-height:11px;color:#5a6084;-webkit-text-stroke:0;"><i>-</i></span>
<span class="a t" id="t129" style="left:596px;top:309px;transform:translate(0.01px,0.05px) rotate(0.03deg);font-size:7.25px;line-height:11px;color:#3d446e;">2024<i>-</i>06<i>-</i>06 13:46:27</span>
<span class="a t" id="t130" style="left:705px;top:309px;transform:translate(0.41px,0.05px) rotate(0.03deg);font-size:7.25px;line-height:11px;color:#3d446e;">2024<i>-</i>06<i>-</i>05 ~ 2024<i>-</i>06<i>-</i>05</span>
<span class="a t" id="t131" style="left:820px;top:309px;transform:translate(0.91px,0.05px) rotate(0.03deg);font-size:7.25px;line-height:11px;color:#3d446e;">2024<i>-</i>06<i>-</i>06 13:46:27</span>
<span class="a t" id="t132" style="left:917px;top:309px;transform:translate(0.31px,0.05px) rotate(0.03deg);font-size:7.25px;line-height:11px;color:#3d446e;">admin@dtstack.com</span>
<span class="a t" id="t133" style="left:1013px;top:309px;transform:translate(0.98px,0.89px) rotate(0.03deg);font-size:6.8px;line-height:10px;color:#3370ff;-webkit-text-stroke:0.15px currentColor;">杀死所有实例</span>
<span class="a t" id="t134" style="left:122px;top:332px;transform:translate(0.71px,0.99px) rotate(0.03deg);font-size:7.25px;line-height:10px;color:#3370ff;">P_doris_001_2024_06_06_13_46_00_2_168163</span>
<span class="a t" id="t135" style="left:122px;top:343px;transform:translate(0.71px,0.49px) rotate(0.03deg);font-size:7.25px;line-height:10px;color:#3370ff;">_1717652766970_1</span>
<span class="a t" id="t136" style="left:303px;top:338px;transform:translate(0.98px,0.08px) rotate(0.03deg);font-size:6.8px;line-height:10px;color:#3d446e;">成功</span>
<span class="a t" id="t137" style="left:377px;top:337px;transform:translate(0.11px,0.24px) rotate(0.03deg);font-size:7.25px;line-height:11px;color:#3d446e;">1/1/1</span>
<span class="a t" id="t138" style="left:462px;top:338px;transform:translate(0.23px,0.08px) rotate(0.03deg);font-size:6.8px;line-height:10px;color:#3d446e;">立即运行</span>
<span class="a t" id="t139" style="left:535px;top:337px;transform:translate(0.31px,0.24px) rotate(0.03deg);font-size:7.25px;line-height:11px;color:#5a6084;-webkit-text-stroke:0;"><i>-</i></span>
<span class="a t" id="t140" style="left:596px;top:337px;transform:translate(0.01px,0.24px) rotate(0.03deg);font-size:7.25px;line-height:11px;color:#3d446e;">2024<i>-</i>06<i>-</i>06 13:46:06</span>
<span class="a t" id="t141" style="left:705px;top:337px;transform:translate(0.41px,0.24px) rotate(0.03deg);font-size:7.25px;line-height:11px;color:#3d446e;">2024<i>-</i>06<i>-</i>05 ~ 2024<i>-</i>06<i>-</i>05</span>
<span class="a t" id="t142" style="left:820px;top:337px;transform:translate(0.91px,0.24px) rotate(0.03deg);font-size:7.25px;line-height:11px;color:#3d446e;">2024<i>-</i>06<i>-</i>06 13:46:07</span>
<span class="a t" id="t143" style="left:917px;top:337px;transform:translate(0.31px,0.24px) rotate(0.03deg);font-size:7.25px;line-height:11px;color:#3d446e;">admin@dtstack.com</span>
<span class="a t" id="t144" style="left:1013px;top:338px;transform:translate(0.98px,0.08px) rotate(0.03deg);font-size:6.8px;line-height:10px;color:#3370ff;-webkit-text-stroke:0.15px currentColor;">杀死所有实例</span>
<span class="a t" id="t145" style="left:122px;top:361px;transform:translate(0.71px,0.18px) rotate(0.03deg);font-size:7.25px;line-height:10px;color:#3370ff;">P_ds_2024_05_23_34_49_2_168163_17164317</span>
<span class="a t" id="t146" style="left:122px;top:371px;transform:translate(0.71px,0.68px) rotate(0.03deg);font-size:7.25px;line-height:10px;color:#3370ff;">01709_1</span>
<span class="a t" id="t147" style="left:303px;top:366px;transform:translate(0.98px,0.26px) rotate(0.03deg);font-size:6.8px;line-height:10px;color:#3d446e;">成功</span>
<span class="a t" id="t148" style="left:377px;top:365px;transform:translate(0.11px,0.43px) rotate(0.03deg);font-size:7.25px;line-height:11px;color:#3d446e;">1/1/1</span>
<span class="a t" id="t149" style="left:462px;top:366px;transform:translate(0.23px,0.26px) rotate(0.03deg);font-size:6.8px;line-height:10px;color:#3d446e;">立即运行</span>
<span class="a t" id="t150" style="left:535px;top:365px;transform:translate(0.31px,0.43px) rotate(0.03deg);font-size:7.25px;line-height:11px;color:#5a6084;-webkit-text-stroke:0;"><i>-</i></span>
<span class="a t" id="t151" style="left:596px;top:365px;transform:translate(0.01px,0.43px) rotate(0.03deg);font-size:7.25px;line-height:11px;color:#3d446e;">2024<i>-</i>05<i>-</i>23 10:35:00</span>
<span class="a t" id="t152" style="left:705px;top:365px;transform:translate(0.41px,0.43px) rotate(0.03deg);font-size:7.25px;line-height:11px;color:#3d446e;">2024<i>-</i>05<i>-</i>22 ~ 2024<i>-</i>05<i>-</i>22</span>
<span class="a t" id="t153" style="left:820px;top:365px;transform:translate(0.91px,0.43px) rotate(0.03deg);font-size:7.25px;line-height:11px;color:#3d446e;">2024<i>-</i>05<i>-</i>23 10:35:02</span>
<span class="a t" id="t154" style="left:917px;top:365px;transform:translate(0.31px,0.43px) rotate(0.03deg);font-size:7.25px;line-height:11px;color:#3d446e;">admin@dtstack.com</span>
<span class="a t" id="t155" style="left:1013px;top:366px;transform:translate(0.98px,0.26px) rotate(0.03deg);font-size:6.8px;line-height:10px;color:#3370ff;-webkit-text-stroke:0.15px currentColor;">杀死所有实例</span>
<span class="a t" id="t156" style="left:122px;top:389px;transform:translate(0.71px,0.37px) rotate(0.03deg);font-size:7.25px;line-height:10px;color:#3370ff;">P_dorisss_2024_05_21_51_56_2_168163_1716</span>
<span class="a t" id="t157" style="left:122px;top:399px;transform:translate(0.71px,0.87px) rotate(0.03deg);font-size:7.25px;line-height:10px;color:#3370ff;">259924346_1</span>
<span class="a t" id="t158" style="left:303px;top:394px;transform:translate(0.98px,0.45px) rotate(0.03deg);font-size:6.8px;line-height:10px;color:#3d446e;">成功</span>
<span class="a t" id="t159" style="left:377px;top:393px;transform:translate(0.11px,0.62px) rotate(0.03deg);font-size:7.25px;line-height:11px;color:#3d446e;">2/2/2</span>
<span class="a t" id="t160" style="left:462px;top:394px;transform:translate(0.23px,0.45px) rotate(0.03deg);font-size:6.8px;line-height:10px;color:#3d446e;">立即运行</span>
<span class="a t" id="t161" style="left:535px;top:393px;transform:translate(0.31px,0.62px) rotate(0.03deg);font-size:7.25px;line-height:11px;color:#5a6084;-webkit-text-stroke:0;"><i>-</i></span>
<span class="a t" id="t162" style="left:596px;top:393px;transform:translate(0.01px,0.62px) rotate(0.03deg);font-size:7.25px;line-height:11px;color:#3d446e;">2024<i>-</i>05<i>-</i>21 10:52:04</span>
<span class="a t" id="t163" style="left:705px;top:393px;transform:translate(0.41px,0.62px) rotate(0.03deg);font-size:7.25px;line-height:11px;color:#3d446e;">2024<i>-</i>05<i>-</i>19 ~ 2024<i>-</i>05<i>-</i>20</span>
<span class="a t" id="t164" style="left:820px;top:393px;transform:translate(0.91px,0.62px) rotate(0.03deg);font-size:7.25px;line-height:11px;color:#3d446e;">2024<i>-</i>05<i>-</i>21 10:52:04</span>
<span class="a t" id="t165" style="left:917px;top:393px;transform:translate(0.31px,0.62px) rotate(0.03deg);font-size:7.25px;line-height:11px;color:#3d446e;">admin@dtstack.com</span>
<span class="a t" id="t166" style="left:1013px;top:394px;transform:translate(0.98px,0.45px) rotate(0.03deg);font-size:6.8px;line-height:10px;color:#3370ff;-webkit-text-stroke:0.15px currentColor;">杀死所有实例</span>
<span class="a t" id="t167" style="left:950px;top:513px;transform:translate(0.43px,0.38px) rotate(0.03deg);font-size:6.8px;line-height:10px;color:#3d446e;">共<span style="color:#7cb9ff">11</span>条数据</span>
<span class="a t" id="t168" style="left:1005px;top:512px;transform:translate(0.91px,0.53px) rotate(0.03deg);font-size:7.2px;line-height:11px;color:#3366ff;">1</span>
<span class="a t" id="t169" style="left:1038px;top:513px;transform:translate(0.12px,0.45px) rotate(0.03deg);font-size:7px;line-height:10px;color:#3d446e;">20 条/页</span>
</div></body></html>
